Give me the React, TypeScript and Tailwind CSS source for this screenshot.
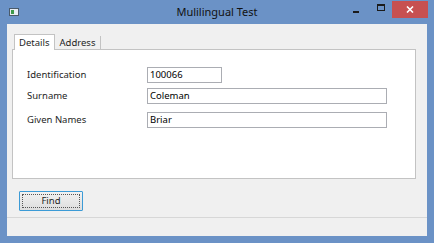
import React from "react";

const FONT = "font-['Segoe_UI','Noto_Sans',sans-serif]";

function AppIcon() {
  return (
    <svg width="10" height="8" viewBox="0 0 10 8" className="shrink-0">
      <rect x="0.5" y="0.5" width="9" height="7" fill="#e9eef3" stroke="#4a5a6a" />
      <rect x="2" y="2" width="3" height="4" fill="#3f9a4a" />
    </svg>
  );
}

function TitleBar() {
  return (
    <div className="h-[24px] grid grid-cols-[1fr_auto_1fr] items-start">
      <div className="pl-[9px] pt-[8px]">
        <AppIcon />
      </div>
      <div className="pt-[4px] text-[11px] leading-[16px] text-[#111]">Mulilingual Test</div>
      <div className="flex justify-end items-start pr-[6px]">
        <div className="w-[28px] h-[17px] flex items-center justify-center pt-[7px]">
          <div className="w-[6px] h-[2px] bg-[#1b1b1b]" />
        </div>
        <div className="w-[22px] h-[17px] flex items-start justify-center pt-[4px]">
          <div className="w-[8px] h-[7px] border border-[#1b1b1b] border-t-2" />
        </div>
        <div className="w-[36px] h-[17px] mt-[1px] bg-[#c75050] flex items-center justify-center">
          <svg width="8" height="7" viewBox="0 0 8 7">
            <path d="M1 0.5 L7 6.5 M7 0.5 L1 6.5" stroke="#fff" strokeWidth="1.6" />
          </svg>
        </div>
      </div>
    </div>
  );
}

function Field({ label, value, wide, className }: { label: string; value: string; wide?: boolean; className?: string }) {
  return (
    <div className={`flex items-center h-[16px] ${className ?? ""}`}>
      <div className="w-[120px] text-[9.5px] text-[#1e1e1e]">{label}</div>
      <div
        className={`h-[16px] border border-[#abadb3] bg-white px-[2px] text-[9.5px] leading-[14px] text-black ${
          wide ? "flex-1" : "w-[75px]"
        }`}
      >
        {value}
      </div>
    </div>
  );
}

export default function App() {
  return (
    <div className={`w-[434px] h-[243px] bg-[#6b92c6] flex flex-col ${FONT}`}>
      <TitleBar />
      <div className="flex-1 mx-[7px] mb-[7px] bg-[#f0f0f0] flex flex-col">
        <div className="pt-[9px] pl-[5px] pr-[11px]">
          <div className="flex items-end h-[16px] pl-[2px] text-[9.5px] text-[#1e1e1e]">
            <div className="h-[16px] px-[4px] border border-b-0 border-[#c3c3c3] bg-white leading-[15px] -mb-px relative">
              Details
            </div>
            <div className="h-[13px] px-[5px] border-r border-[#c3c3c3] leading-[13px]">Address</div>
          </div>
          <div className="h-[130px] border border-[#c3c3c3] bg-white pl-[14px] pr-[28px] pt-[17px]">
            <Field label="Identification" value="100066" />
            <Field label="Surname" value="Coleman" wide className="mt-[5px]" />
            <Field label="Given Names" value="Briar" wide className="mt-[8px]" />
          </div>
        </div>
        <div className="flex pl-[12px] mt-[12px]">
          <button className="w-[64px] h-[20px] border border-[#3c9bd6] rounded-[1px] bg-gradient-to-b from-[#f2f2f2] to-[#dddddd] p-[2px]">
            <div className="w-full h-full border border-dotted border-[#555] flex items-center justify-center text-[9.5px] text-[#1e1e1e] leading-none">
              Find
            </div>
          </button>
        </div>
        <div className="flex-1" />
        <div className="h-[19px] border-t border-[#d7d7d7]" />
      </div>
    </div>
  );
}
